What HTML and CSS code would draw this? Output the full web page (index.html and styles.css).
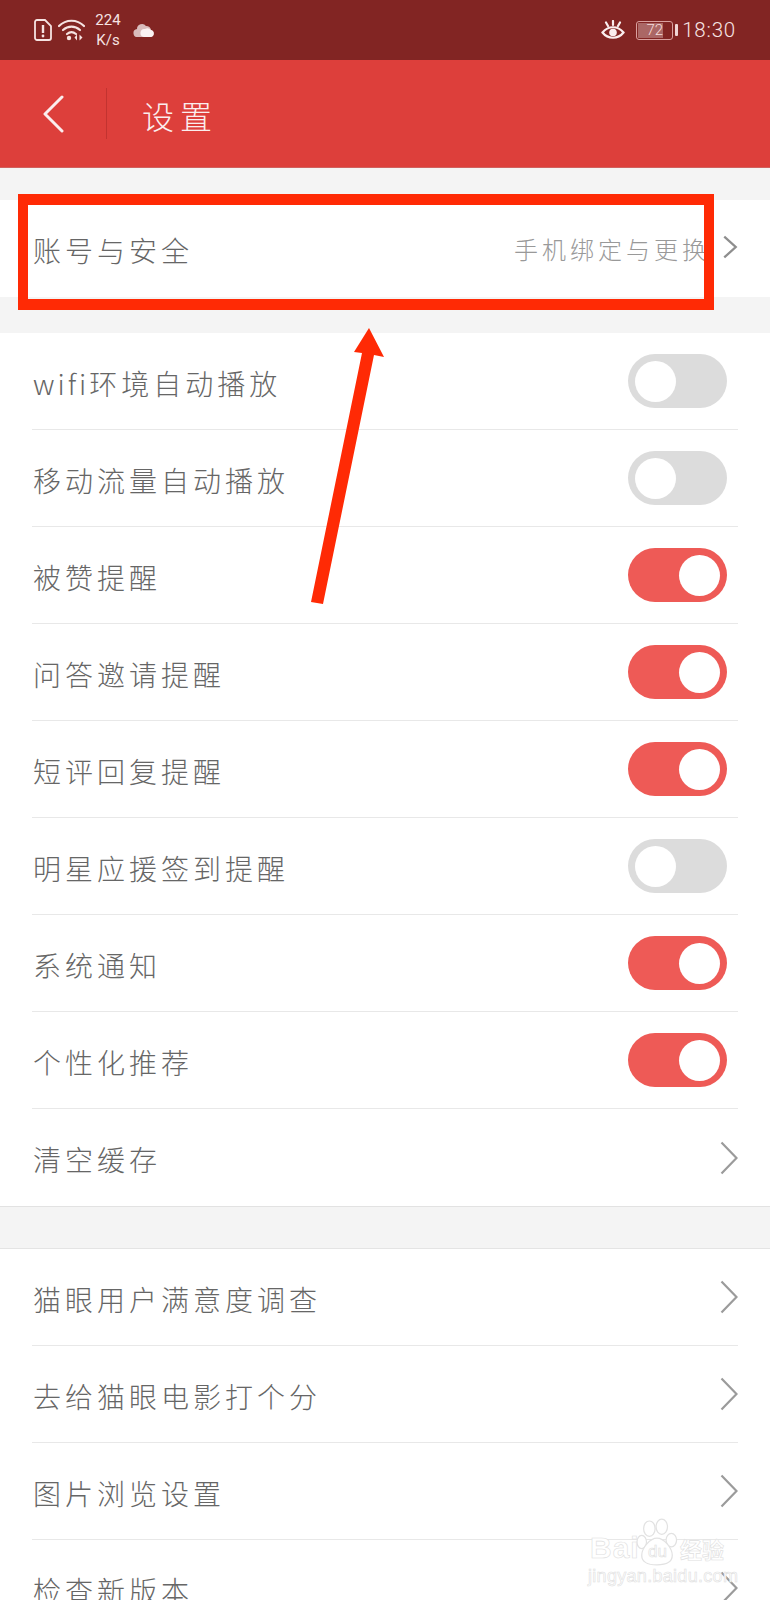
FILE: index.html
```html
<!DOCTYPE html>
<html lang="zh-CN">
<head>
<meta charset="utf-8">
<title>设置</title>
<link rel="stylesheet" href="styles.css">
</head>
<body>
<div class="page">
  <div class="status">
    <svg class="sim" viewBox="0 0 18 22"><path d="M3 1h8l6 6v12a2 2 0 0 1-2 2H3a2 2 0 0 1-2-2V3a2 2 0 0 1 2-2z" fill="none" stroke="#f6e3e2" stroke-width="1.8"/><path d="M9 6v8" stroke="#f6e3e2" stroke-width="2.4"/><circle cx="9" cy="17" r="1.4" fill="#f6e3e2"/></svg>
    <svg class="wifi" viewBox="0 0 27 22"><g fill="none" stroke="#f6e3e2" stroke-width="2.200" stroke-linecap="round"><path d="M1 7C8 0 19 0 26 7"/><path d="M5 11c5-4.500 12-4.500 17 0"/><path d="M9 15c3-2.500 6-2.500 9 0"/></g><circle cx="11" cy="19" r="2.200" fill="#f6e3e2"/><path d="M19 15.500v6l-2.500-3zM21.500 15.500v6l3-3z" fill="#f6e3e2"/></svg>
    <div class="speed"><span>224</span><span>K/s</span></div>
    <svg class="cloud" viewBox="0 0 22 14"><path d="M5 14a4 4 0 0 1-1-8 5 5 0 0 1 9-3 5 5 0 0 1 5 4 3.600 3.600 0 0 1 0 7z" fill="#d9bcbc"/><path d="M11 14a4 4 0 0 1 1-8 5 5 0 0 1 6 1 3.600 3.600 0 0 1 0 7z" fill="#fbf3f3"/></svg>
    <div class="status-fill"></div>
    <svg class="eye" viewBox="0 0 24 21"><g fill="none" stroke="#fbeeee" stroke-width="2.200" stroke-linecap="round"><path d="M1.500 12.500C7 5.500 17 5.500 22.500 12.500 17 19.500 7 19.500 1.500 12.500z"/><path d="M12 1v4M5 2.500l2 3.500M19 2.500l-2 3.500"/></g><circle cx="12" cy="12.500" r="3.800" fill="#fbeeee"/></svg>
    <div class="battery"><div class="battery-fill"></div><span class="battery-num">72</span></div>
    <div class="nub"></div>
    <span class="time">18:30</span>
  </div>

  <header class="header">
    <svg class="back" viewBox="0 0 22 38"><path d="M20 2 3 19l17 17" fill="none" stroke="#fbeeee" stroke-width="3" stroke-linecap="round" stroke-linejoin="round"/></svg>
    <div class="header-rule"></div>
    <h1 class="title">设置</h1>
  </header>

  <section class="group first">
    <div class="row plain">
      <span class="label">账号与安全</span>
      <span class="hint">手机绑定与更换</span>
      <svg class="chev small" viewBox="0 0 15 23"><path d="M2 1.500 13 11.500 2 21.500" fill="none" stroke="#8e8e8e" stroke-width="2.200"/></svg>
    </div>
  </section>

  <section class="group second">
    <div class="row"><span class="label"><span class="latin">wifi</span>环境自动播放</span><div class="toggle"><i></i></div></div>
    <div class="row"><span class="label">移动流量自动播放</span><div class="toggle"><i></i></div></div>
    <div class="row"><span class="label">被赞提醒</span><div class="toggle on"><i></i></div></div>
    <div class="row"><span class="label">问答邀请提醒</span><div class="toggle on"><i></i></div></div>
    <div class="row"><span class="label">短评回复提醒</span><div class="toggle on"><i></i></div></div>
    <div class="row"><span class="label">明星应援签到提醒</span><div class="toggle"><i></i></div></div>
    <div class="row"><span class="label">系统通知</span><div class="toggle on"><i></i></div></div>
    <div class="row"><span class="label">个性化推荐</span><div class="toggle on"><i></i></div></div>
    <div class="row plain"><span class="label">清空缓存</span><svg class="chev" viewBox="0 0 18 34"><path d="M1.500 1.500 16.500 17 1.500 32.500" fill="none" stroke="#9b9b9b" stroke-width="2.200"/></svg></div>
  </section>

  <section class="group third">
    <div class="row"><span class="label">猫眼用户满意度调查</span><svg class="chev" viewBox="0 0 18 34"><path d="M1.500 1.500 16.500 17 1.500 32.500" fill="none" stroke="#9b9b9b" stroke-width="2.200"/></svg></div>
    <div class="row"><span class="label">去给猫眼电影打个分</span><svg class="chev" viewBox="0 0 18 34"><path d="M1.500 1.500 16.500 17 1.500 32.500" fill="none" stroke="#9b9b9b" stroke-width="2.200"/></svg></div>
    <div class="row"><span class="label">图片浏览设置</span><svg class="chev" viewBox="0 0 18 34"><path d="M1.500 1.500 16.500 17 1.500 32.500" fill="none" stroke="#9b9b9b" stroke-width="2.200"/></svg></div>
    <div class="row"><span class="label">检查新版本</span><svg class="chev" viewBox="0 0 18 34"><path d="M1.500 1.500 16.500 17 1.500 32.500" fill="none" stroke="#9b9b9b" stroke-width="2.200"/></svg></div>
  </section>

  <div class="mark-box"></div>
  <svg class="mark-arrow" viewBox="0 0 770 1600"><path d="M369 328 384 357 374 355 323 604 311 602 362 353 354 352z" fill="#ff2a05"/></svg>

  <div class="watermark">
    <svg class="paw" viewBox="0 0 44 52"><g fill="#fff" stroke="#e2e2e2" stroke-width="1.300"><ellipse cx="14" cy="12" rx="6" ry="8"/><ellipse cx="27" cy="10" rx="6" ry="8"/><ellipse cx="37" cy="24" rx="5.500" ry="7"/><ellipse cx="6" cy="26" rx="5" ry="7"/><path d="M22 22c7 0 16 10 16 18 0 8-7 10-16 10S6 48 6 40c0-8 9-18 16-18z"/></g></svg>
    <span class="wm-bai">Bai</span>
    <span class="wm-du">du</span>
    <span class="wm-cn">经验</span>
    <span class="wm-url">jingyan.baidu.com</span>
  </div>
</div>
</body>
</html>
```
FILE: styles.css
```css
* { box-sizing: border-box; }
html, body { margin: 0; padding: 0; }
body { background: #f4f4f4; }

.page {
  position: relative;
  width: 770px;
  height: 1600px;
  overflow: hidden;
  background: #f4f4f4;
  font-family: "Noto Sans CJK SC", "Noto Sans", sans-serif;
}

.status {
  display: flex;
  align-items: center;
  height: 60px;
  padding: 0 34px;
  background: #822523;
  color: #f6e3e2;
  font-family: Roboto, "Liberation Sans", sans-serif;
}
.sim { width: 18px; height: 22px; }
.wifi { width: 27px; height: 22px; margin-left: 6px; }
.speed {
  display: flex;
  flex-direction: column;
  align-items: center;
  width: 28px;
  margin-left: 9px;
  font-size: 15px;
  line-height: 20px;
}
.cloud { width: 22px; height: 14px; margin-left: 11px; }
.status-fill { flex: 1; }
.eye { width: 24px; height: 21px; }
.battery {
  display: flex;
  align-items: center;
  justify-content: center;
  position: relative;
  width: 37px;
  height: 19px;
  margin-left: 11px;
  border: 1px solid #d9a09e;
  border-radius: 3px;
}
.battery-fill {
  position: absolute;
  left: 1px;
  top: 1px;
  bottom: 1px;
  width: 25px;
  background: #ab6765;
}
.battery-num {
  position: relative;
  font-size: 15px;
  font-weight: 300;
  color: #f6dddc;
}
.nub {
  width: 3px;
  height: 12px;
  margin-left: 2px;
  background: #f0d6d5;
  border-radius: 1px;
}
.time {
  margin-left: 4px;
  font-size: 20.5px;
  font-weight: 300;
  letter-spacing: 0.8px;
}

.header {
  display: flex;
  align-items: center;
  height: 108px;
  background: #dd3f3b;
  border-bottom: 1px solid #d0615e;
}
.back { width: 22px; height: 38px; margin-left: 42px; }
.header-rule { width: 1px; height: 51px; margin-left: 42px; background: #c23330; }
.title {
  margin: 2px 0 0 35px;
  font-size: 32px;
  font-weight: 300;
  letter-spacing: 6px;
  color: #fbeeee;
}

.group { background: #fff; }
.first { margin-top: 32px; }
.second { margin-top: 36px; }
.third {
  margin-top: 41px;
  border-top: 1px solid #e4e4e4;
}
.second { border-bottom: 1px solid #e2e2e2; }

.row {
  display: flex;
  align-items: center;
  height: 97px;
  margin: 0 32px;
  border-bottom: 1px solid #e8e8e8;
}
.row.plain { border-bottom: 0; }
.label {
  flex: 1;
  margin: 3px 0 0 1px;
  font-size: 28px;
  font-weight: 300;
  letter-spacing: 4px;
  color: #666;
}
.latin { letter-spacing: 3px; }
.hint {
  font-size: 24px;
  font-weight: 300;
  letter-spacing: 4px;
  color: #999;
  margin: 0 12px 0 0;
}
.chev { width: 18px; height: 34px; }
.chev.small { width: 16px; height: 24px; margin-top: -3px; }

.toggle {
  display: flex;
  align-items: center;
  justify-content: flex-start;
  width: 99px;
  height: 54px;
  margin-right: 11px;
  padding: 0 7px;
  border-radius: 27px;
  background: #dcdcdc;
}
.toggle i {
  display: block;
  width: 41px;
  height: 41px;
  border-radius: 50%;
  background: #fff;
}
.toggle.on { background: #ee5a56; justify-content: flex-end; }

.mark-box {
  position: absolute;
  left: 18px;
  top: 194px;
  width: 696px;
  height: 116px;
  border: solid #ff2a05;
  border-width: 11px 10px;
}
.mark-arrow {
  position: absolute;
  left: 0;
  top: 0;
  width: 770px;
  height: 1600px;
}

.watermark {
  position: absolute;
  left: 588px;
  top: 1512px;
  width: 150px;
  height: 76px;
}
.paw { position: absolute; left: 48px; top: 5px; width: 42px; height: 50px; }
.watermark span {
  position: absolute;
  font-family: "Liberation Sans", "Noto Sans CJK SC", sans-serif;
  color: #fff;
  -webkit-text-stroke: 0.6px #e0e0e0;
}
.wm-bai { left: 2px; top: 19px; font-size: 30px; line-height: 34px; font-weight: 700; letter-spacing: 1px; }
.wm-du { left: 60px; top: 30px; font-size: 17px; line-height: 20px; }
.wm-cn { left: 92px; top: 26px; font-size: 22px; line-height: 26px; font-weight: 700; }
.wm-url { left: 0; top: 54px; font-size: 18px; line-height: 20px; letter-spacing: 0.3px; }
```
